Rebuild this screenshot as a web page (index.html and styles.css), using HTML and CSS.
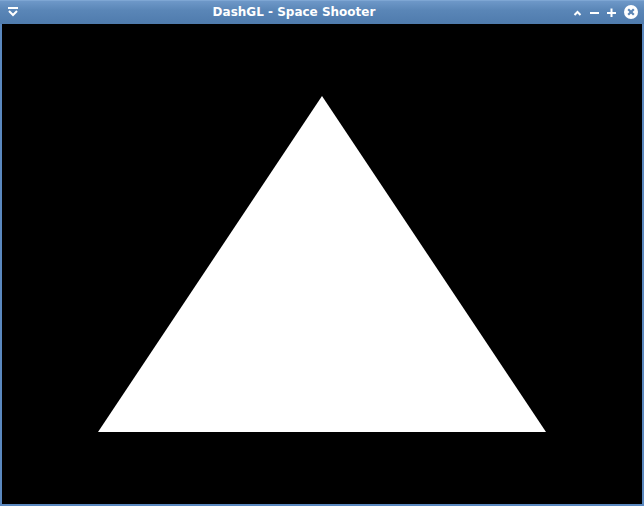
FILE: index.html
```html
<!DOCTYPE html>
<html>
<head>
<meta charset="utf-8">
<link rel="stylesheet" href="styles.css">
</head>
<body>
<div class="window">
  <div class="titlebar">
    <div class="btn menu">
      <svg width="10" height="10" viewBox="0 0 10 10"><rect x="0" y="0" width="10" height="2" fill="#fff"/><path d="M1 4 L5 8 L9 4" fill="none" stroke="#fff" stroke-width="2"/></svg>
    </div>
    <div class="title">DashGL - Space Shooter</div>
    <div class="controls">
      <div class="btn"><svg width="9" height="9" viewBox="0 0 9 9"><path d="M1.5 7 L4.5 4 L7.5 7" fill="none" stroke="#fff" stroke-width="2"/></svg></div>
      <div class="btn"><svg width="9" height="9" viewBox="0 0 9 9"><rect x="0" y="4" width="9" height="2" fill="#fff"/></svg></div>
      <div class="btn"><svg width="9" height="9" viewBox="0 0 9 9"><rect x="0" y="4" width="9" height="2" fill="#fff"/><rect x="3.5" y="0.5" width="2" height="9" fill="#fff"/></svg></div>
      <div class="btn close"><svg width="14" height="14" viewBox="0 0 14 14"><circle cx="7" cy="7" r="7" fill="#fff"/><path d="M4.2 4.2 L9.8 9.8 M9.8 4.2 L4.2 9.8" stroke="#5b86b6" stroke-width="2.2"/></svg></div>
    </div>
  </div>
  <div class="canvas">
    <svg width="640" height="480" viewBox="0 0 640 480"><polygon points="320,72 96,408 544,408" fill="#fff"/></svg>
  </div>
</div>
</body>
</html>
```
FILE: styles.css
```css
html, body { margin: 0; padding: 0; background: #000; }
.window {
  width: 640px;
  border: 2px solid #5a88bf;
  border-top: 0;
  background: #000;
}
.titlebar {
  height: 24px;
  margin: 0 -2px;
  display: flex;
  align-items: center;
  background: linear-gradient(#6e98c8, #5a86b7 40%, #4f7bad);
  border-top: 1px solid #7ea6d3;
  box-sizing: border-box;
  color: #fff;
}
.btn { display: flex; align-items: center; justify-content: center; }
.menu { width: 10px; margin-left: 8px; margin-top: -1px; }
.title {
  flex: 1;
  text-align: center;
  font-family: "DejaVu Sans", sans-serif;
  font-weight: bold;
  font-size: 12px;
  padding-right: 3px;
  margin-top: -1px;
}
.controls { display: flex; align-items: center; gap: 8px; margin-right: 6px; margin-top: -1px; }
.controls .btn { width: 9px; height: 14px; }
.controls .close { width: 14px; }
.canvas { width: 640px; height: 480px; display: block; }
.canvas svg { display: block; }
```
